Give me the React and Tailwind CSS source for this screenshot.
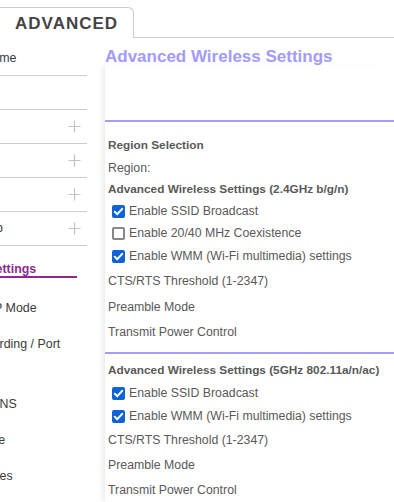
const topItems = [
  { label: "ADVANCED Home", plus: false },
  { label: "WPS Wizard", plus: false },
  { label: "Setup", plus: true },
  { label: "Security", plus: true },
  { label: "Administration", plus: true },
  { label: "Advanced Setup", plus: true },
];

const subItems = [
  { label: "Dynamic DNS", ml: "-ml-[61px]" },
  { label: "VPN Service", ml: "-ml-[65px]" },
  { label: "Static Routes", ml: "-ml-[61px]" },
];

function Plus() {
  return (
    <svg width="13" height="13" viewBox="0 0 13 13" className="ml-auto mr-[6px] shrink-0">
      <path d="M6.5 0.5V12.5M0.5 6.5H12.5" stroke="#c4c4c4" strokeWidth="1.2" fill="none" />
    </svg>
  );
}

function Check({ on }) {
  if (!on) {
    return <span className="w-[13px] h-[13px] shrink-0 rounded-[2px] border-2 border-[#878787] bg-white" />;
  }
  return (
    <span className="w-[13px] h-[13px] shrink-0 rounded-[2px] bg-[#0e63d6] flex items-center justify-center">
      <svg width="13" height="13" viewBox="0 0 13 13">
        <path d="M2.8 6.8L5.3 9.2L10.2 3.8" stroke="#fff" strokeWidth="2" fill="none" strokeLinecap="round" strokeLinejoin="round" />
      </svg>
    </span>
  );
}

function Row({ h, bold, children }) {
  return (
    <div
      className={
        "flex items-center whitespace-nowrap " +
        h +
        (bold ? " font-bold text-[11.8px]" : " text-[12.3px]")
      }
    >
      {children}
    </div>
  );
}

function CheckRow({ h, on, children }) {
  return (
    <div className={"flex items-center gap-[4px] pl-[4px] text-[12.3px] whitespace-nowrap " + h}>
      <Check on={on} />
      <span>{children}</span>
    </div>
  );
}

export default function App() {
  return (
    <div className="w-[394px] h-[502px] overflow-hidden bg-white font-['Liberation_Sans',Arial,sans-serif]">
      {/* Tab strip */}
      <div className="flex h-[38px]">
        <div className="-ml-[10px] mt-[7px] w-[144px] h-[31px] shrink-0 border-t border-l border-r border-[#cccccc] rounded-tr-[6px] bg-white pl-[24px] pt-[4px]">
          <span className="text-[17px] leading-[20px] font-bold tracking-[1px] text-[#444444]">ADVANCED</span>
        </div>
        <div className="flex-1 border-b border-[#cccccc]" />
      </div>

      <div className="flex">
        {/* Side menu */}
        <div className="w-[105px] shrink-0">
          <div className="w-[87px] overflow-hidden text-[12.4px] text-[#3a3a3a] pt-[4px]">
            {topItems.map((it) => (
              <div key={it.label} className="h-[34px] border-b border-[#cccccc] flex items-center">
                <span className="-ml-[88px] whitespace-nowrap shrink-0">{it.label}</span>
                {it.plus && <Plus />}
              </div>
            ))}
            <div className="mr-[10px] h-[32px] border-b-2 border-[#8e2a8e] flex items-end">
              <span className="-ml-[67px] whitespace-nowrap font-bold leading-[14px] text-[#8e2a8e]">
                Wireless Settings
              </span>
            </div>
            <div className="h-[12px]" />
            <div className="h-[36px] flex items-center">
              <span className="-ml-[61px] whitespace-nowrap shrink-0">Router / AP Mode</span>
            </div>
            <div className="h-[60px] pt-[6px]">
              <div className="-ml-[61px] w-[140px] leading-[24px]">Port Forwarding / Port Triggering</div>
            </div>
            {subItems.map((s) => (
              <div key={s.label} className="h-[36px] flex items-center">
                <span className={s.ml + " whitespace-nowrap shrink-0"}>{s.label}</span>
              </div>
            ))}
          </div>
        </div>

        {/* Content */}
        <div className="flex-1 min-w-0">
          <div className="h-[27px] pt-[9px]">
            <h1 className="text-[17px] leading-[20px] font-bold text-[#a29bff] whitespace-nowrap">
              Advanced Wireless Settings
            </h1>
          </div>
          <div className="bg-white shadow-[-5px_0_5px_-2px_rgba(0,0,0,0.07)] text-[#595959]">
            <div className="h-[55px]" />
            <div className="h-[2px] bg-[#a29dff]" />
            <div className="pl-[3px] pt-[12px]">
              <Row h="h-[23px]" bold>Region Selection</Row>
              <Row h="h-[22px]">Region:</Row>
              <Row h="h-[21px]" bold>Advanced Wireless Settings (2.4GHz b/g/n)</Row>
              <CheckRow h="h-[22px]" on>Enable SSID Broadcast</CheckRow>
              <CheckRow h="h-[23px]">Enable 20/40 MHz Coexistence</CheckRow>
              <CheckRow h="h-[23px]" on>Enable WMM (Wi-Fi multimedia) settings</CheckRow>
              <Row h="h-[26px]">CTS/RTS Threshold (1-2347)</Row>
              <Row h="h-[26px]">Preamble Mode</Row>
              <Row h="h-[25px]">Transmit Power Control</Row>
            </div>
            <div className="h-[7px]" />
            <div className="h-[2px] bg-[#a29dff]" />
            <div className="pl-[3px] pt-[6px]">
              <Row h="h-[22px]" bold>Advanced Wireless Settings (5GHz 802.11a/n/ac)</Row>
              <CheckRow h="h-[23px]" on>Enable SSID Broadcast</CheckRow>
              <CheckRow h="h-[23px]" on>Enable WMM (Wi-Fi multimedia) settings</CheckRow>
              <Row h="h-[25px]">CTS/RTS Threshold (1-2347)</Row>
              <Row h="h-[25px]">Preamble Mode</Row>
              <Row h="h-[25px]">Transmit Power Control</Row>
            </div>
          </div>
        </div>
      </div>
    </div>
  );
}
